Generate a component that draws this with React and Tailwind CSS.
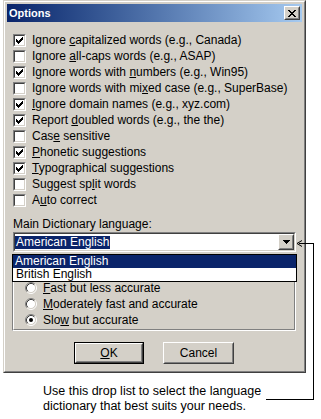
import React from 'react';

const options = [
  { pre: 'Ignore ', key: 'c', post: 'apitalized words (e.g., Canada)', on: true },
  { pre: 'Ignore ', key: 'a', post: 'll-caps words (e.g., ASAP)', on: false },
  { pre: 'Ignore words with ', key: 'n', post: 'umbers (e.g., Win95)', on: true },
  { pre: 'Ignore words with mi', key: 'x', post: 'ed case (e.g., SuperBase)', on: false },
  { pre: '', key: 'I', post: 'gnore domain names (e.g., xyz.com)', on: true },
  { pre: 'Report ', key: 'd', post: 'oubled words (e.g., the the)', on: true },
  { pre: 'Cas', key: 'e', post: ' sensitive', on: false },
  { pre: '', key: 'P', post: 'honetic suggestions', on: true },
  { pre: '', key: 'T', post: 'ypographical suggestions', on: true },
  { pre: 'Suggest sp', key: 'l', post: 'it words', on: false },
  { pre: 'A', key: 'u', post: 'to correct', on: false },
];

const speeds = [
  { pre: '', key: 'F', post: 'ast but less accurate', on: false },
  { pre: '', key: 'M', post: 'oderately fast and accurate', on: false },
  { pre: 'Slo', key: 'w', post: ' but accurate', on: true },
];

function Label({ pre, k, post }) {
  return (
    <span className="whitespace-nowrap">
      {pre}
      <span className="underline">{k}</span>
      {post}
    </span>
  );
}

function Raised({ className = '', children }) {
  return (
    <div className={`border border-t-white border-l-white border-b-[#404040] border-r-[#404040] ${className}`}>
      <div className="h-full border border-t-[#d4d0c8] border-l-[#d4d0c8] border-b-[#808080] border-r-[#808080] bg-[#d4d0c8] flex items-center justify-center">
        {children}
      </div>
    </div>
  );
}

function CheckBox({ on }) {
  return (
    <div className="w-[13px] h-[13px] shrink-0 border border-t-[#808080] border-l-[#808080] border-b-white border-r-white">
      <div className="h-full border border-t-[#404040] border-l-[#404040] border-b-[#d4d0c8] border-r-[#d4d0c8] bg-white">
        {on && (
          <svg width="9" height="9" viewBox="0 0 9 9" shapeRendering="crispEdges">
            <g fill="#000">
              <rect x="1" y="3" width="1" height="3" />
              <rect x="2" y="4" width="1" height="3" />
              <rect x="3" y="5" width="1" height="3" />
              <rect x="4" y="4" width="1" height="3" />
              <rect x="5" y="3" width="1" height="3" />
              <rect x="6" y="2" width="1" height="3" />
              <rect x="7" y="1" width="1" height="3" />
            </g>
          </svg>
        )}
      </div>
    </div>
  );
}

function Radio({ on }) {
  return (
    <svg width="12" height="12" viewBox="0 0 12 12" className="shrink-0">
      <circle cx="6" cy="6" r="4.5" fill="#fff" />
      <path d="M2.11 9.89 A5.5 5.5 0 0 1 9.89 2.11" fill="none" stroke="#808080" />
      <path d="M9.89 2.11 A5.5 5.5 0 0 1 2.11 9.89" fill="none" stroke="#fff" />
      <path d="M2.82 9.18 A4.5 4.5 0 0 1 9.18 2.82" fill="none" stroke="#404040" />
      <path d="M9.18 2.82 A4.5 4.5 0 0 1 2.82 9.18" fill="none" stroke="#d4d0c8" />
      {on && <circle cx="6" cy="6" r="2" fill="#000" />}
    </svg>
  );
}

export default function App() {
  return (
    <div className="relative w-[321px] h-[419px] bg-white overflow-hidden font-['Liberation_Sans',Arial,sans-serif] text-black">
      {/* dialog window */}
      <div className="ml-[3px] w-[303px] h-[373px] border border-t-[#d4d0c8] border-l-[#d4d0c8] border-b-[#404040] border-r-[#404040]">
        <div className="h-full border border-t-white border-l-white border-b-[#808080] border-r-[#808080] bg-[#d4d0c8] p-[2px] flex flex-col font-['Liberation_Sans_Narrow','Liberation_Sans',Arial,sans-serif] text-[12px]">
          {/* title bar */}
          <div className="h-[18px] flex items-center justify-between bg-linear-to-r from-[#0a246a] to-[#a6caf0] pl-[2px] pr-[2px]">
            <span className="text-white font-bold text-[11px] leading-none font-['Liberation_Sans',Arial,sans-serif]">Options</span>
            <Raised className="w-[16px] h-[14px]">
              <svg width="8" height="7" viewBox="0 0 8 7" shapeRendering="crispEdges">
                <g fill="#000">
                  <rect x="0" y="0" width="2" height="1" /><rect x="6" y="0" width="2" height="1" />
                  <rect x="1" y="1" width="2" height="1" /><rect x="5" y="1" width="2" height="1" />
                  <rect x="2" y="2" width="4" height="1" />
                  <rect x="3" y="3" width="2" height="1" />
                  <rect x="2" y="4" width="4" height="1" />
                  <rect x="1" y="5" width="2" height="1" /><rect x="5" y="5" width="2" height="1" />
                  <rect x="0" y="6" width="2" height="1" /><rect x="6" y="6" width="2" height="1" />
                </g>
              </svg>
            </Raised>
          </div>

          {/* check options */}
          <div className="mt-[10px] flex flex-col pl-[6px]">
            {options.map((o, i) => (
              <div key={i} className="h-[16px] flex items-center gap-[6px]">
                <CheckBox on={o.on} />
                <Label pre={o.pre} k={o.key} post={o.post} />
              </div>
            ))}
          </div>

          <div className="mt-[10px] pl-[6px] leading-[13px]">Main Dictionary language:</div>

          {/* combo + open list */}
          <div className="relative ml-[6px] mt-[1px] w-[283px]">
            <div className="h-[20px] border border-t-[#808080] border-l-[#808080] border-b-white border-r-white">
              <div className="h-full border border-t-[#404040] border-l-[#404040] border-b-[#d4d0c8] border-r-[#d4d0c8] bg-white flex items-center justify-between">
                <span className="bg-[#0a246a] text-white leading-[13px] px-[1px]">American English</span>
                <Raised className="w-[16px] h-[16px]">
                  <svg width="7" height="4" viewBox="0 0 7 4" shapeRendering="crispEdges">
                    <g fill="#000">
                      <rect x="0" y="0" width="7" height="1" />
                      <rect x="1" y="1" width="5" height="1" />
                      <rect x="2" y="2" width="3" height="1" />
                      <rect x="3" y="3" width="1" height="1" />
                    </g>
                  </svg>
                </Raised>
              </div>
            </div>
            <div className="absolute z-10 left-[-1px] top-[22px] w-[285px] border border-black bg-white">
              <div className="h-[13px] leading-[13px] bg-[#0a246a] text-white px-[2px]">American English</div>
              <div className="h-[13px] leading-[13px] px-[3px]">British English</div>
            </div>
          </div>

          {/* suggestion speed group */}
          <div className="ml-[5px] mt-[11px] w-[284px] border border-t-[#808080] border-l-[#808080] border-b-white border-r-white">
            <div className="border border-t-white border-l-white border-b-[#808080] border-r-[#808080] pt-[15px] pb-[1px] pl-[11px] flex flex-col">
              {speeds.map((s, i) => (
                <div key={i} className="h-[16px] flex items-center gap-[6px]">
                  <Radio on={s.on} />
                  <Label pre={s.pre} k={s.key} post={s.post} />
                </div>
              ))}
            </div>
          </div>

          {/* buttons */}
          <div className="mt-[11px] pl-[67px] flex gap-[19px]">
            <div className="w-[70px] h-[22px] border border-black">
              <Raised className="h-full">
                <Label pre="" k="O" post="K" />
              </Raised>
            </div>
            <Raised className="w-[71px] h-[22px]">Cancel</Raised>
          </div>
        </div>
      </div>

      {/* caption */}
      <div className="mt-[11px] pl-[43px] text-[12.5px] leading-[15px]">
        <div>Use this drop list to select the language</div>
        <div>dictionary that best suits your needs.</div>
      </div>

      {/* connector arrow */}
      <svg className="absolute left-0 top-0 pointer-events-none" width="321" height="419" viewBox="0 0 321 419" shapeRendering="crispEdges">
        <path d="M298.5 243.5 H313.5 V399.5 H266" fill="none" stroke="#000" />
        <path d="M297 243.5 L302 240.5 M297 243.5 L302 246.5" fill="none" stroke="#000" shapeRendering="auto" />
      </svg>
    </div>
  );
}
